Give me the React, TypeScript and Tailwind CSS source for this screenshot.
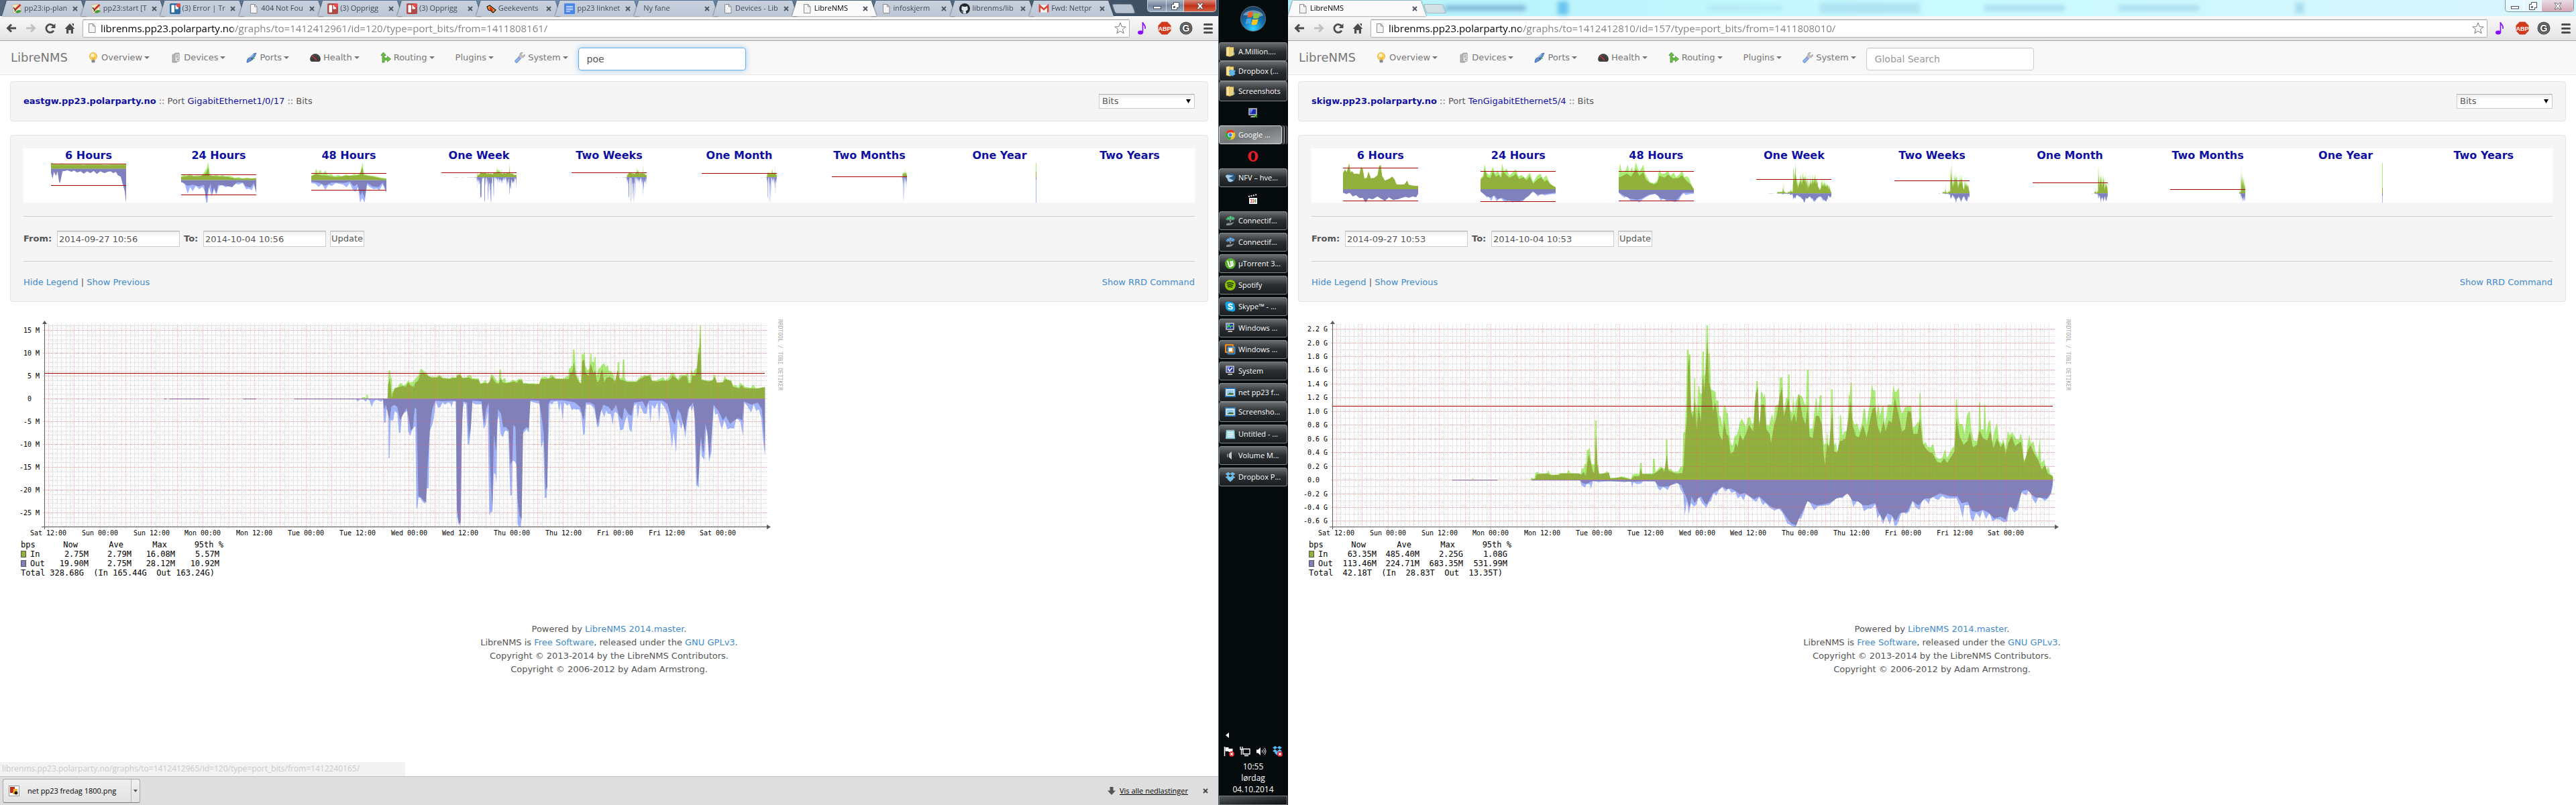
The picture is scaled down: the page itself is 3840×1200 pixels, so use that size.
import React from "react";
import type { ReactNode } from "react";

/* ------------------------------------------------------------------ */
/* Traffic data (x, y pairs on a 1404 x 907 sample raster)             */
/* ------------------------------------------------------------------ */

type Series = { zero: number; inMax: string; inAvg: string; outMax: string; outAvg: string; idle: [number, number][] };

const EAST: Series = {
  zero: 403,
  idle: [[320, 325], [330, 408], [473, 499], [573, 755]],
  inMax:
    "704,403 706,396 711,396 713,403 714,384 716,384 718,403 755,403 757,276 760,276 761,310 763,310 764,375 768,355 774,352 778,336 783,333 785,345 790,338 795,322 799,330 805,326 809,312 815,300 819,270 823,272 826,282 833,290 836,306 840,304 850,306 854,296 858,298 862,308 875,312 880,306 888,308 891,294 897,290 899,308 908,308 912,298 918,298 920,312 932,312 936,335 941,330 945,318 949,334 953,330 957,290 961,300 966,316 971,330 973,272 976,272 977,320 984,310 986,330 992,328 1000,318 1005,325 1010,314 1017,314 1019,332 1027,332 1030,336 1036,334 1050,336 1054,308 1062,304 1068,312 1074,294 1078,300 1082,312 1096,314 1103,304 1107,300 1108,268 1111,268 1113,256 1115,256 1116,184 1119,184 1121,250 1123,300 1127,308 1130,334 1132,330 1133,204 1136,204 1137,196 1139,196 1140,255 1142,262 1144,275 1148,270 1150,200 1152,200 1153,236 1157,240 1158,216 1160,216 1162,300 1166,268 1170,262 1173,250 1177,244 1180,262 1184,252 1186,278 1190,278 1194,290 1198,320 1202,318 1203,240 1206,240 1207,310 1212,308 1213,228 1216,228 1217,310 1221,325 1240,325 1244,310 1250,304 1256,296 1260,300 1268,292 1270,322 1278,322 1284,316 1292,306 1296,320 1303,308 1309,286 1312,286 1316,302 1320,316 1326,294 1334,298 1340,286 1343,330 1346,270 1350,290 1355,268 1359,268 1360,175 1362,175 1363,75 1365,75 1367,316 1374,320 1382,322 1388,318 1390,296 1393,296 1396,330 1408,328 1412,298 1415,316 1424,320 1428,344 1434,342 1438,354 1442,330 1446,340 1452,350 1462,354 1468,340 1472,356 1480,354 1490,350",
  inAvg:
    "755,403 756,340 759,310 761,345 763,402 766,372 770,356 778,350 784,346 790,350 795,330 800,345 806,350 809,330 814,325 819,290 824,286 828,292 834,300 840,308 852,308 856,302 862,312 876,314 882,310 889,310 891,298 897,298 901,311 914,308 920,316 932,318 936,337 944,332 950,336 954,325 958,302 962,320 966,332 972,335 975,308 979,330 986,334 994,330 1002,326 1007,332 1010,320 1017,320 1019,336 1050,338 1054,314 1066,314 1072,312 1076,304 1082,314 1108,314 1111,285 1115,284 1118,240 1121,295 1127,326 1132,336 1134,235 1138,228 1141,290 1147,300 1150,245 1153,262 1156,290 1159,275 1163,330 1167,322 1171,280 1173,270 1177,330 1181,310 1187,305 1193,312 1198,328 1203,275 1207,318 1214,320 1221,328 1240,328 1246,316 1256,304 1266,302 1270,324 1280,326 1290,322 1300,324 1306,315 1310,300 1316,310 1322,322 1328,304 1338,302 1341,332 1346,332 1348,300 1354,300 1357,284 1360,190 1362,210 1364,100 1366,318 1380,326 1388,322 1392,305 1397,332 1408,330 1413,315 1424,325 1428,350 1440,356 1444,342 1450,356 1476,358 1484,354 1490,352",
  outMax:
    "692,403 694,408 697,416 701,406 708,406 712,416 716,406 720,412 724,440 728,416 733,408 738,412 742,416 746,410 748,510 751,510 753,450 756,460 757,668 759,668 761,500 766,500 769,458 774,468 777,556 780,556 783,475 788,465 793,458 795,550 799,570 803,540 809,524 811,893 813,893 815,845 819,848 824,866 828,872 831,804 835,804 837,550 842,520 845,490 849,415 853,443 858,440 862,420 867,430 872,420 877,422 879,440 883,415 888,416 890,930 893,962 896,972 898,930 900,470 904,420 908,430 911,608 914,605 917,548 920,420 926,428 938,428 942,540 946,520 950,460 953,926 956,910 959,910 962,735 965,740 967,788 969,500 972,480 975,560 979,575 984,545 990,550 992,695 994,836 997,836 998,680 1003,684 1006,700 1008,965 1011,975 1014,975 1016,942 1018,560 1022,550 1026,540 1030,556 1033,415 1040,420 1051,425 1054,626 1058,590 1061,846 1065,846 1068,605 1071,420 1075,430 1079,416 1086,415 1089,462 1092,420 1096,502 1099,420 1105,435 1109,425 1114,455 1118,448 1122,452 1127,450 1132,468 1136,566 1139,560 1142,430 1150,430 1157,445 1160,480 1163,532 1167,524 1171,450 1177,485 1181,455 1184,470 1190,472 1193,522 1197,460 1203,470 1208,545 1214,540 1218,500 1222,478 1226,540 1230,555 1235,435 1240,425 1242,494 1246,430 1254,470 1260,470 1263,420 1267,512 1270,430 1275,448 1281,420 1284,512 1287,420 1294,440 1301,475 1306,555 1309,626 1312,550 1317,644 1320,490 1327,540 1331,500 1335,582 1339,490 1344,430 1347,458 1352,430 1356,788 1361,800 1364,580 1367,660 1372,678 1377,500 1381,686 1386,640 1390,430 1393,475 1398,470 1402,510 1406,540 1411,500 1417,540 1423,535 1430,538 1434,490 1442,505 1447,570 1450,420 1457,440 1463,465 1468,430 1473,458 1478,450 1483,490 1486,580 1490,660",
  outAvg:
    "746,403 749,450 752,430 756,475 759,500 762,440 768,430 774,440 779,500 786,470 792,445 796,490 800,545 804,538 808,440 811,450 815,840 819,842 822,850 826,860 830,868 833,700 838,520 842,450 848,412 860,414 888,412 890,900 894,960 897,960 899,600 902,415 910,420 913,580 917,530 920,412 938,415 943,518 947,450 952,420 955,720 959,900 962,560 966,640 970,450 976,470 980,530 986,530 991,545 994,700 998,680 1000,520 1004,530 1008,850 1012,930 1016,940 1019,545 1025,530 1030,535 1033,410 1050,412 1056,500 1059,560 1063,810 1066,800 1068,430 1072,410 1098,410 1110,415 1120,420 1130,440 1137,500 1141,420 1150,420 1158,432 1164,520 1169,470 1175,430 1186,440 1192,460 1200,430 1206,480 1212,500 1216,440 1224,470 1230,480 1235,420 1252,415 1258,445 1264,412 1290,412 1300,425 1308,490 1314,520 1320,450 1326,470 1334,550 1340,450 1350,420 1354,500 1358,790 1361,740 1365,570 1370,650 1374,510 1378,560 1382,670 1386,560 1390,430 1400,460 1408,500 1414,480 1422,515 1430,500 1438,490 1446,500 1449,415 1464,430 1476,420 1484,450 1488,560 1490,650",
};

const SKI: Series = {
  zero: 766,
  idle: [[320, 408], [474, 800]],
  inMax:
    "358,766 360,756 362,766 472,766 474,755 480,762 482,735 486,730 490,737 504,737 507,722 510,737 514,743 526,742 529,736 543,736 547,720 550,735 568,737 570,743 572,715 576,715 578,694 581,694 582,632 585,632 586,624 588,628 591,690 593,697 597,697 598,500 601,500 602,697 604,700 606,738 615,738 620,728 625,732 627,757 640,757 650,750 662,757 668,762 671,742 678,738 684,742 686,690 689,690 690,738 710,738 711,672 714,672 716,730 722,715 726,706 733,716 736,716 736,586 739,586 740,716 746,718 752,730 760,728 765,706 768,704 770,556 773,552 775,440 777,184 780,184 781,205 784,205 785,440 787,460 790,460 791,310 793,310 794,420 797,450 799,346 801,346 803,380 806,380 807,192 810,192 811,300 813,290 815,75 818,75 819,202 822,202 824,360 830,370 833,372 834,410 838,410 840,478 843,482 846,526 849,432 852,436 854,464 857,468 859,530 862,600 866,615 870,570 874,566 877,545 880,510 884,492 888,510 892,530 895,490 900,484 904,515 907,512 909,408 911,408 912,324 915,324 917,505 920,505 921,374 924,374 926,400 928,378 930,400 932,520 937,524 940,496 943,468 946,506 949,436 956,428 958,308 963,308 965,470 968,430 970,400 973,400 974,294 977,294 978,450 982,470 984,378 987,465 990,410 994,382 1000,390 1003,400 1006,428 1009,428 1011,274 1014,274 1016,536 1022,536 1024,490 1028,402 1030,402 1032,474 1036,388 1039,388 1041,556 1044,608 1048,602 1050,546 1053,610 1056,612 1058,361 1061,361 1063,614 1067,598 1070,636 1073,636 1075,476 1077,476 1080,568 1084,550 1090,544 1092,388 1094,388 1096,330 1098,330 1100,496 1104,520 1109,512 1113,550 1118,510 1121,448 1124,448 1127,520 1131,456 1134,420 1137,336 1140,366 1144,366 1146,484 1150,420 1153,480 1158,436 1160,436 1162,520 1166,480 1168,430 1176,430 1179,340 1182,372 1185,372 1188,358 1190,358 1192,436 1196,470 1202,440 1214,438 1217,530 1222,526 1226,508 1229,508 1230,378 1232,378 1234,496 1238,606 1242,596 1246,618 1252,620 1256,604 1258,620 1262,664 1268,672 1274,668 1280,626 1283,668 1288,650 1294,622 1298,616 1301,406 1303,406 1305,476 1308,516 1314,516 1318,560 1322,484 1326,460 1328,460 1331,545 1336,590 1342,592 1345,545 1346,418 1348,418 1350,540 1355,540 1356,430 1358,430 1360,560 1364,510 1368,498 1372,600 1376,545 1381,510 1385,590 1390,606 1393,580 1398,624 1402,546 1406,568 1411,552 1418,582 1424,586 1427,556 1431,590 1433,676 1438,674 1440,612 1444,562 1447,605 1452,592 1456,640 1461,665 1464,576 1467,690 1473,674 1477,725 1481,704 1484,738 1490,748",
  inAvg:
    "472,766 482,760 484,742 490,740 506,738 512,745 526,744 532,738 566,738 572,742 576,730 580,750 583,690 586,650 590,690 594,730 597,735 600,560 603,700 606,740 625,734 628,760 650,754 668,764 674,750 684,750 687,715 690,740 712,740 720,728 728,712 733,730 738,650 741,724 756,738 768,736 771,690 774,560 777,490 779,260 782,210 785,460 789,490 792,400 796,545 800,430 804,510 808,290 811,370 814,260 817,130 820,330 824,370 828,460 832,420 836,470 840,560 846,590 850,500 854,560 858,570 862,650 868,640 872,600 876,620 880,560 886,590 892,560 898,520 906,550 911,380 915,350 918,530 922,430 928,430 932,540 938,560 941,600 946,530 952,480 958,390 962,350 966,480 972,430 975,400 980,510 986,470 990,510 995,380 1002,480 1008,520 1012,430 1016,572 1022,580 1028,480 1034,480 1040,520 1043,640 1046,698 1050,600 1054,620 1060,450 1064,640 1070,642 1075,590 1080,590 1086,580 1092,480 1096,410 1100,520 1106,570 1112,575 1120,520 1127,575 1133,510 1138,450 1144,440 1148,520 1154,560 1160,500 1164,550 1170,500 1176,510 1182,400 1190,480 1196,550 1202,540 1207,460 1213,460 1218,560 1226,560 1231,490 1236,600 1242,625 1248,640 1256,648 1264,685 1272,690 1278,670 1284,690 1290,668 1298,640 1302,490 1308,570 1316,610 1324,590 1328,550 1334,620 1342,610 1347,545 1354,580 1362,590 1368,545 1374,625 1381,580 1388,620 1394,600 1398,650 1403,600 1410,570 1416,615 1428,595 1434,690 1440,640 1446,610 1454,650 1462,680 1468,720 1475,700 1480,738 1486,745 1490,752",
  outMax:
    "568,766 572,790 578,800 582,785 588,785 590,808 594,772 606,776 626,770 655,776 668,772 670,800 673,776 680,785 688,782 692,772 716,775 720,802 725,814 730,798 736,805 740,812 744,790 752,786 760,780 765,810 770,830 773,924 777,860 781,920 785,870 791,886 796,876 800,840 806,868 815,892 820,866 824,860 829,825 834,838 840,810 846,800 852,818 858,804 864,824 871,818 876,850 882,838 887,858 892,832 898,840 906,856 912,864 918,844 925,880 930,868 938,890 948,904 956,894 964,915 972,960 982,972 989,976 993,940 1000,938 1006,900 1012,850 1018,875 1025,902 1032,884 1042,882 1054,878 1062,862 1070,842 1080,848 1088,828 1096,838 1101,888 1108,862 1116,868 1122,906 1130,894 1136,896 1144,875 1148,938 1153,920 1159,965 1165,925 1172,965 1177,930 1182,972 1186,970 1190,945 1196,908 1204,918 1210,908 1217,860 1222,888 1230,900 1236,852 1242,856 1248,874 1254,834 1260,850 1267,856 1274,838 1282,850 1302,848 1308,880 1314,935 1318,880 1326,880 1330,938 1335,952 1340,912 1348,935 1353,902 1360,942 1366,912 1372,950 1380,942 1387,944 1394,956 1401,952 1406,880 1414,912 1422,900 1428,820 1438,836 1444,806 1450,850 1456,872 1462,844 1468,848 1474,860 1480,850 1486,830 1490,790",
  outAvg:
    "568,766 574,780 580,784 588,776 594,771 650,773 670,774 714,771 722,794 730,796 742,795 756,778 766,790 772,824 777,850 782,890 786,840 792,870 798,850 804,840 812,870 816,876 822,850 828,825 836,815 846,796 854,808 862,804 872,816 880,830 890,824 900,840 908,852 918,840 928,862 940,885 950,895 960,895 970,930 980,960 990,970 996,935 1004,900 1012,862 1020,870 1030,880 1042,876 1056,868 1068,850 1080,842 1090,826 1100,860 1110,862 1120,880 1130,880 1144,870 1150,910 1160,948 1168,915 1176,925 1184,950 1192,915 1206,910 1216,860 1228,880 1240,850 1252,848 1270,826 1290,840 1304,840 1312,870 1324,864 1332,905 1342,910 1354,900 1364,912 1376,938 1388,930 1398,944 1406,886 1418,900 1430,815 1440,810 1448,830 1456,845 1466,845 1478,850 1486,825 1490,770",
};

const close = (pts: string, zero: number) => {
  const list = pts.split(" ");
  return `${list[0].split(",")[0]},${zero} ${pts} ${list[list.length - 1].split(",")[0]},${zero}`;
};

function Areas({ s }: { s: Series }) {
  return (
    <>
      <polygon points={close(s.inMax, s.zero)} fill="#aaee77" />
      <polygon points={close(s.inAvg, s.zero)} fill="#91b13c" />
      <polygon points={close(s.outMax, s.zero)} fill="#a2b5ff" />
      <polygon points={close(s.outAvg, s.zero)} fill="#8080bd" />
      {s.idle.map(([a, b]) => (
        <rect key={a} x={a} y={s.zero - 1} width={b - a} height="4" fill="#8080bd" />
      ))}
    </>
  );
}

/* ------------------------------------------------------------------ */
/* Thumbnails                                                          */
/* ------------------------------------------------------------------ */

type Thumb = { title: string; span?: number; lines: number[]; sliver?: boolean; zero?: number; inMax?: string; inAvg?: string; outMax?: string; outAvg?: string };

const EAST_THUMBS: Thumb[] = [
  {
    title: "6 Hours", lines: [2, 34], zero: 29,
    inMax: "0,3 3,0 6,8 10,4 18,10 26,3 34,10 50,8 64,9 70,7 78,11 90,8 110,9 120,8 130,11 150,9 165,8 183,9",
    inAvg: "0,12 183,12",
    outMax: "0,45 4,72 7,42 12,60 16,40 20,88 22,92 28,40 34,38 40,35 50,42 56,36 64,45 72,40 80,50 88,40 96,48 104,38 112,52 120,40 130,48 138,42 145,40 152,48 158,42 163,58 170,64 175,98 180,130 183,180",
    outAvg: "0,45 4,72 7,42 12,60 16,40 20,88 22,92 28,40 34,38 40,35 50,42 56,36 64,45 72,40 80,50 88,40 96,48 104,38 112,52 120,40 130,48 138,42 145,40 152,48 158,42 163,58 170,64 175,98 180,130 183,180",
  },
  {
    title: "24 Hours", lines: [18, 48], zero: 80,
    inMax: "0,62 6,56 14,60 20,50 30,62 40,58 48,62 56,45 62,28 66,0 70,50 76,62 86,56 94,62 100,56 108,64 116,60 124,64 130,70 140,66 150,72 160,68 170,72 183,70",
    inAvg: "0,66 20,60 40,64 56,56 62,44 66,24 69,60 90,62 110,64 130,72 150,73 183,72",
    outMax: "0,90 8,92 16,140 22,110 28,130 36,105 44,120 52,110 58,130 61,180 64,180 68,110 74,152 80,120 86,145 92,108 100,100 108,112 116,105 124,112 132,95 140,100 150,92 158,120 166,118 172,125 178,100 183,138",
    outAvg: "0,86 16,105 28,100 44,108 56,100 61,170 66,120 72,95 76,145 80,110 86,140 90,100 108,105 124,110 136,90 150,90 158,108 170,112 177,92 183,135",
  },
  {
    title: "48 Hours", lines: [16, 41], zero: 80,
    inMax: "0,60 8,50 12,28 16,50 22,32 27,54 34,36 40,56 48,52 56,62 66,56 74,64 84,54 94,60 104,52 112,56 120,44 125,0 128,50 138,58 150,60 160,64 170,68 183,72",
    inAvg: "0,62 12,52 24,58 40,60 60,66 84,60 104,60 118,56 124,22 128,58 150,64 170,72 183,74",
    outMax: "0,92 10,96 18,110 26,96 34,124 42,100 50,106 60,92 68,96 78,100 86,112 94,94 102,125 108,132 114,110 119,180 124,160 130,180 136,100 144,112 152,120 160,118 166,125 174,98 183,138",
    outAvg: "0,86 20,92 34,104 50,90 80,92 94,86 104,108 112,96 120,150 124,130 130,160 136,92 150,108 164,110 174,90 183,130",
  },
  { title: "One Week", span: 1, lines: [15] },
  { title: "Two Weeks", span: 2, lines: [15] },
  { title: "One Month", span: 4, lines: [16] },
  { title: "Two Months", span: 9, lines: [21] },
  { title: "One Year", sliver: true, lines: [] },
  { title: "Two Years", lines: [] },
];

const SKI_THUMBS: Thumb[] = [
  {
    title: "6 Hours", lines: [8, 57], zero: 120,
    inMax: "0,48 5,32 9,44 15,2 18,45 22,40 27,52 34,50 40,54 44,18 48,30 52,72 58,70 62,42 68,72 76,70 84,58 88,18 92,10 95,60 102,82 112,74 120,64 126,78 130,98 140,100 150,98 156,82 160,100 170,104 183,106",
    inAvg: "0,48 5,32 9,44 15,6 18,45 22,40 27,52 34,50 40,54 44,20 48,30 52,72 58,70 62,42 68,72 76,70 84,58 88,18 92,12 95,60 102,82 112,74 120,64 126,78 130,98 140,100 150,98 156,82 160,100 170,104 183,106",
    outMax: "0,135 8,142 16,136 24,152 32,146 40,160 48,158 55,180 62,160 72,165 84,152 90,160 102,172 112,156 122,168 134,164 144,158 152,154 160,158 170,152 178,156 183,140",
    outAvg: "0,135 8,142 16,136 24,152 32,146 40,160 48,158 55,178 62,160 72,165 84,152 90,160 102,172 112,156 122,168 134,164 144,158 152,154 160,158 170,152 178,156 183,140",
  },
  {
    title: "24 Hours", lines: [13, 58], zero: 120,
    inMax: "0,72 6,60 10,6 14,46 22,58 30,20 36,52 42,36 48,62 53,6 57,40 64,28 70,60 78,46 86,30 92,62 100,56 110,72 120,46 128,88 138,60 146,50 152,76 160,58 168,90 176,104 183,110",
    inAvg: "0,78 8,62 11,30 16,65 24,70 30,42 38,65 44,55 50,70 54,40 62,55 70,68 80,60 86,50 94,75 104,66 112,80 120,62 128,95 140,74 148,66 156,86 162,78 170,98 183,112",
    outMax: "0,130 8,142 16,158 20,150 26,175 32,148 40,176 48,150 54,170 62,180 70,166 78,180 86,172 94,178 102,176 110,160 118,150 126,132 132,136 140,152 148,140 156,148 166,144 183,140",
    outAvg: "0,130 14,150 24,158 34,148 42,165 52,160 66,172 94,174 104,168 118,148 128,130 138,145 156,142 183,136",
  },
  {
    title: "48 Hours", lines: [13, 57], zero: 123,
    inMax: "0,60 3,2 7,40 12,44 18,32 22,10 26,48 32,20 36,46 42,0 46,24 50,42 55,28 60,10 64,50 70,70 76,88 86,94 94,82 99,30 104,52 112,50 120,38 126,60 134,46 140,66 150,50 154,34 160,66 167,62 172,74 178,104 183,118",
    inAvg: "0,68 10,60 20,50 30,64 42,30 50,60 60,44 66,76 76,92 86,98 94,90 99,60 112,68 120,55 132,72 146,70 154,58 164,80 176,100 183,120",
    outMax: "0,136 8,150 14,158 20,150 28,170 36,175 44,172 50,180 58,166 66,156 76,146 88,142 96,150 102,170 110,162 118,176 126,170 136,178 146,172 152,150 158,138 164,146 174,142 183,140",
    outAvg: "0,134 14,150 28,162 44,168 56,162 74,144 90,140 102,160 118,168 140,170 156,136 183,136",
  },
  { title: "One Week", span: 1, lines: [25] },
  { title: "Two Weeks", span: 2, lines: [27] },
  { title: "One Month", span: 4, lines: [30] },
  { title: "Two Months", span: 9, lines: [40] },
  { title: "One Year", sliver: true, lines: [] },
  { title: "Two Years", lines: [] },
];

function ThumbGraph({ t, s }: { t: Thumb; s: Series }) {
  const zero = Math.round((s.zero - 68) / 15.117);
  return (
    <svg className="h-[60px] w-28" viewBox="0 0 112 60" aria-hidden="true">
      {t.zero !== undefined && (
        <svg width="112" height="60" viewBox="0 0 183 180" preserveAspectRatio="none">
          <polygon points={close(t.inMax!, t.zero)} fill="#aaee77" />
          <polygon points={close(t.inAvg!, t.zero)} fill="#91b13c" />
          <polygon points={close(t.outMax!, t.zero)} fill="#a2b5ff" />
          <polygon points={close(t.outAvg!, t.zero)} fill="#8080bd" />
        </svg>
      )}
      {t.span && (
        <svg width="112" height="60" viewBox={`${1490 - 1404 * t.span} 68 ${1404 * t.span} 907`} preserveAspectRatio="none">
          <Areas s={s} />
        </svg>
      )}
      {t.sliver && (
        <>
          <rect x="110" y="1" width="1" height={zero - 1} fill="#aaee77" />
          <rect x="110" y={zero - 8} width="1" height="8" fill="#91b13c" />
          <rect x="110" y={zero} width="1" height={60 - zero} fill="#a2b5ff" />
          <rect x="110" y={zero} width="1" height="4" fill="#8080bd" />
        </>
      )}
      {t.lines.map((y) => (
        <rect key={y} x="0" y={y} width="112" height="1" fill="#aa0000" />
      ))}
    </svg>
  );
}

/* ------------------------------------------------------------------ */
/* Main RRD chart                                                      */
/* ------------------------------------------------------------------ */

const TIMES = ["Sat 12:00", "Sun 00:00", "Sun 12:00", "Mon 00:00", "Mon 12:00", "Tue 00:00", "Tue 12:00", "Wed 00:00", "Wed 12:00", "Thu 00:00", "Thu 12:00", "Fri 00:00", "Fri 12:00", "Sat 00:00"];

type ChartSpec = { s: Series; labels: [string, number][]; minor: number; limit: number };

const range = (n: number) => Array.from({ length: n }, (_, i) => i);

function Chart({ spec }: { spec: ChartSpec }) {
  const zeroY = Math.round(spec.s.zero / 3);
  const minors = range(120)
    .map((i) => zeroY + (i - 60) * spec.minor)
    .filter((y) => y > 23 && y < 325);
  const hours = range(168)
    .map((i) => 72 + (i * 76.75) / 12)
    .filter((x) => x < 1140);
  const six = range(28).map((i) => Math.round(72 + i * 38.37) + 0.5);
  return (
    <svg className="block h-[345px] w-[1180px]" viewBox="0 0 1180 345" role="img" aria-label="Port traffic in bits per second">
      <g transform="scale(0.7653 0.33333)">
        <Areas s={spec.s} />
      </g>
      <g stroke="#8c8c8c" strokeOpacity="0.38" strokeDasharray="1 1">
        {hours.map((x, i) => (i % 6 ? <line key={i} x1={Math.round(x) + 0.5} x2={Math.round(x) + 0.5} y1="23" y2="325" /> : null))}
        {minors.map((y) => (
          <line key={y} x1="64" x2="1143" y1={Math.round(y) + 0.5} y2={Math.round(y) + 0.5} />
        ))}
      </g>
      <g stroke="#f06060" strokeOpacity="0.55" strokeDasharray="1 1">
        {six.map((x) => (
          <line key={x} x1={x} x2={x} y1="23" y2="328" />
        ))}
        {spec.labels.map(([l, y]) => (
          <line key={l} x1="64" x2="1143" y1={y + 0.5} y2={y + 0.5} />
        ))}
      </g>
      <rect x="66" y={spec.limit} width="1074" height="1" fill="#aa0000" />
      <path d="M62 325.5H1146M66.5 329V20" stroke="#5a5a5a" fill="none" />
      <path d="M63 23L66.500 18L70 23zM1143 322L1149 325.500L1143 329z" fill="#5a5a5a" />
      <g fontFamily="DejaVu Sans Mono, monospace" fontSize="10" fill="#000">
        {spec.labels.map(([l, y]) => (
          <text key={l} x={l.startsWith("0") && !l.endsWith("G") ? 47 : 59} y={y + 4} textAnchor="end">{l}</text>
        ))}
        {TIMES.map((l, i) => (
          <text key={l} x={72 + Math.round(i * 76.8)} y="338" textAnchor="middle">{l}</text>
        ))}
      </g>
      <text transform="translate(1160 16) rotate(90)" fontFamily="DejaVu Sans Mono, monospace" fontSize="8" fill="#a8a8a8">
        RRDTOOL / TOBI OETIKER
      </text>
    </svg>
  );
}

type Row = { name: string; color: string; values: string[] };

function Legend({ rows, total }: { rows: Row[]; total: string }) {
  return (
    <div className="pl-[31px] font-['DejaVu_Sans_Mono','Liberation_Mono',monospace] text-[12px] leading-[14px] text-black">
      <table className="w-[302px] table-fixed">
        <thead>
          <tr className="h-[14px]">
            <th className="w-9 p-0 text-left font-normal">bps</th>
            <th className="w-[65px] p-0 pr-4 text-right font-normal">Now</th>
            <th className="w-16 p-0 pr-3 text-right font-normal">Ave</th>
            <th className="w-[65px] p-0 pr-3 text-right font-normal">Max</th>
            <th className="w-[72px] p-0 text-right font-normal">95th %</th>
          </tr>
        </thead>
        <tbody>
          {rows.map((r) => (
            <tr key={r.name} className="h-[14px]">
              <th className="p-0 text-left font-normal">
                <span className="flex items-center gap-1.5">
                  <span className={`h-[10px] w-2 border border-[#555] ${r.color}`} />
                  {r.name}
                </span>
              </th>
              {r.values.map((v, i) => (
                <td key={i} className={i === 3 ? "p-0 pr-1.5 text-right" : "p-0 text-right"}>{v}</td>
              ))}
            </tr>
          ))}
        </tbody>
      </table>
      <p className="whitespace-pre">{total}</p>
    </div>
  );
}

/* ------------------------------------------------------------------ */
/* Icons                                                               */
/* ------------------------------------------------------------------ */

const Ico = ({ children, className = "size-4" }: { children: ReactNode; className?: string }) => (
  <svg viewBox="0 0 16 16" className={`${className} shrink-0`} fill="none" aria-hidden="true">{children}</svg>
);

const PageIcon = () => (
  <Ico>
    <path d="M3.500 1.500h6l3.500 3.500v9.500h-9.500z" fill="#f4f4f4" stroke="#8a8a8a" />
    <path d="M9.500 1.500v3.500h3.500" stroke="#8a8a8a" />
  </Ico>
);
const WikiIcon = () => (
  <Ico>
    <path d="M1 2l11-1 3 12-12 2z" fill="#efe6c8" stroke="#b8a878" strokeWidth=".6" />
    <path d="M13.500 2L5 10" stroke="#d03020" strokeWidth="3" />
    <path d="M3 6l3 4-1 2" stroke="#444" strokeWidth="1.500" />
    <path d="M6 13c2-3 5-4 9-2-2 3-6 5-9 2z" fill="#3f9b3a" />
  </Ico>
);
const TrelloIcon = ({ red }: { red?: boolean }) => (
  <Ico>
    <rect width="16" height="16" rx="2" fill={red ? "#b04a46" : "#2f6f9f"} />
    <rect x="2.500" y="2.500" width="4.500" height="11" rx=".6" fill="#fff" />
    <rect x="8.500" y="2.500" width="4.500" height="6" rx=".6" fill="#fff" />
    <circle cx="13" cy="3" r="3" fill="#ee4a4a" />
  </Ico>
);
const GeekIcon = () => (
  <Ico>
    <path d="M2 5l4-2 9 7-4 4-3-3-4-1z" fill="#f5a020" stroke="#201008" strokeWidth="1.200" />
    <path d="M6 5l5 4-1 3-4-3z" fill="#e02010" />
  </Ico>
);
const DocsIcon = () => (
  <Ico>
    <rect width="16" height="16" rx="1" fill="#4a86e8" />
    <path d="M3 4.500h10M3 7h10M3 9.500h10M3 12h6" stroke="#fff" strokeWidth="1.200" />
  </Ico>
);
const GithubIcon = () => (
  <Ico>
    <circle cx="8" cy="8" r="8" fill="#24292e" />
    <path d="M4 4l2 1h4l2-1 .4 2.500c1 2.500-.4 4.500-2.800 4.800.6.700.6 1.500.6 4.200H5.800v-2c-2 .3-2-1.300-3-1.700 1.500-.2 1.500 1 3 .7 0-.5.200-.9.600-1.200C4 11 2.600 9 3.600 6.500z" fill="#dfe5ee" />
  </Ico>
);
const GmailIcon = () => (
  <Ico>
    <rect x=".5" y="2.500" width="15" height="11" fill="#f4f4f4" />
    <path d="M1.800 13.500V3.500L8 9l6.200-5.500v10" stroke="#d64a3c" strokeWidth="2.600" />
  </Ico>
);

const Bulb = () => (
  <Ico>
    <circle cx="8" cy="6" r="5.500" fill="#ffd45c" stroke="#d99a28" strokeWidth=".7" />
    <circle cx="7" cy="4.500" r="2.500" fill="#fff6c8" />
    <path d="M6 7l2 4 2-4" stroke="#e09020" strokeWidth=".8" />
    <rect x="5.500" y="11" width="5" height="4.500" rx="1.500" fill="#9a9a9a" />
    <path d="M5.500 13h5" stroke="#666" strokeWidth=".7" />
  </Ico>
);
const Server = () => (
  <Ico>
    <path d="M3 4l5-3h5v11l-4 3H3z" fill="#b4b4b4" stroke="#8a8a8a" strokeWidth=".7" />
    <path d="M7 2.500h6v11H7z" fill="#e2e2e2" stroke="#999" strokeWidth=".6" />
    <path d="M8.500 5h3M8.500 7h3" stroke="#888" />
    <circle cx="11" cy="10.500" r="1" fill="#50b040" />
  </Ico>
);
const Plug = () => (
  <Ico>
    <path d="M1 15c0-4 1-6 4-7l6-6 4-1-2 5-5 6c-2 2-4 1-5 3z" fill="#5f8fce" stroke="#3a66a4" strokeWidth=".8" />
    <path d="M6 7l4 4" stroke="#2e548c" strokeWidth="1.200" />
    <path d="M6 8l5-5" stroke="#a9cbf0" strokeWidth="1.200" />
    <path d="M9 9l4 1-2-3" fill="#58a050" />
  </Ico>
);
const Gauge = () => (
  <Ico>
    <path d="M.5 10a7.500 7.500 0 0115 0c0 2-1 3.500-2 3.500H2.500C1.500 13.500.5 12 .5 10z" fill="#3c3c3c" stroke="#222" strokeWidth=".6" />
    <path d="M3 9a5 5 0 0110 0" stroke="#888" strokeDasharray="1 1.500" />
    <path d="M4 5l6 7" stroke="#e03028" strokeWidth="1.200" />
  </Ico>
);
const Arrows = () => (
  <Ico>
    <path d="M4.500 0l4 4.500h-2.500v4l4.500 0V6L15.500 10l-5 4v-2.500H6V15H3V4.500H.8z" fill="#6cc04a" stroke="#3c8a2c" strokeWidth=".8" />
  </Ico>
);
const Wrench = () => (
  <Ico>
    <path d="M15 3l-2.500 2.500-2-1L10 2.500 12.500.5c-3-.8-5 1-4.500 3.800L5.500 7l3 3 2.700-2.500C14 8 16 6 15 3z" fill="#c4c4c4" stroke="#858585" strokeWidth=".7" />
    <path d="M6 7l3 3-4.500 5c-2 1.500-4.500-.5-3.500-3z" fill="#8fb2ec" stroke="#5478bc" strokeWidth=".7" />
  </Ico>
);

/* ------------------------------------------------------------------ */
/* Browser chrome                                                      */
/* ------------------------------------------------------------------ */

type TabSpec = { title: string; icon?: ReactNode; active?: boolean };

function Tab({ tab }: { tab: TabSpec }) {
  const tone = tab.active ? "text-black" : "text-[#444a54]";
  return (
    <div className={`-mr-2 min-w-0 flex-1 drop-shadow-[0_0_1px_#3c4654] ${tab.active ? "z-10" : ""}`}>
      <div
        role="tab"
        aria-selected={!!tab.active}
        className={`flex h-[23px] items-center pr-2.5 pl-[14px] [clip-path:polygon(7px_0,calc(100%-8px)_0,100%_100%,0_100%)] ${tab.active ? "bg-[#f9f9f9]" : "bg-linear-to-b from-[#c8d0dd] to-[#bcc7d7]"}`}
      >
        {tab.icon && <span className="mr-[3px]">{tab.icon}</span>}
        <button className={`min-w-0 flex-1 overflow-hidden text-left text-[11px] whitespace-nowrap ${tone}`}>{tab.title}</button>
        <button aria-label={`Close ${tab.title}`} className="size-[14px] shrink-0 p-[3px]">
          <svg viewBox="0 0 8 8" className="size-2"><path d="M1 1l6 6M7 1L1 7" stroke="#50565e" strokeWidth="1.800" /></svg>
        </button>
      </div>
    </div>
  );
}

function WindowButtons({ light }: { light?: boolean }) {
  const edge = light ? "border-[#7c9aa6] bg-white/40" : "border-[#c5ccd6] bg-linear-to-b from-[#aeb9c8] via-[#7888a0] to-[#9fb0c6]";
  return (
    <div className={`ml-auto mr-[3px] flex h-[18px] overflow-hidden rounded-b-[5px] border border-t-0 ${edge}`}>
      <button aria-label="Minimize" className="flex w-[28px] items-center justify-center border-r border-white/60">
        <svg viewBox="0 0 12 10" className="h-2.5 w-3"><rect x=".5" y="5.500" width="11" height="3.500" fill="#fff" stroke="#454b58" /></svg>
      </button>
      <button aria-label="Restore" className="flex w-[26px] items-center justify-center border-r border-white/60">
        <svg viewBox="0 0 12 12" className="size-3"><path d="M3.500.5h8v8h-3v3h-8v-8h3zM3.500 6.500h2v2h-2z" fill="#fff" stroke="#454b58" fillRule="evenodd" /></svg>
      </button>
      <button aria-label="Close" className={`flex w-[47px] items-center justify-center ${light ? "bg-linear-to-b from-[#e8dce8] to-[#d4a8b4]" : "bg-linear-to-b from-[#d88a78] via-[#c0301a] to-[#d8603c]"}`}>
        <svg viewBox="0 0 12 10" className="h-2.5 w-3"><path d="M1 .5h3l2 2.500 2-2.500h3L7.800 5 11 9.500H8L6 7 4 9.500H1L4.200 5z" fill="#fff" stroke="#454b58" strokeWidth=".8" /></svg>
      </button>
    </div>
  );
}

const NewTab = ({ light }: { light?: boolean }) => (
  <button aria-label="New tab" className={`mt-1.5 h-[14px] w-[30px] skew-x-[20deg] rounded-[3px] border ${light ? "border-[#a0b8c0] bg-[#d4e2e6]" : "border-[#8c98a8] bg-[#b8c4d2]"}`} />
);

function Toolbar({ url }: { url: string }) {
  const btn = "flex size-[18px] items-center justify-center";
  return (
    <div className="flex h-[37px] items-center border-b border-[#a6a6a6] bg-linear-to-b from-[#f9f9f9] to-[#e4e4e4] pl-2">
      <div className="flex w-[115px] gap-[11px]">
        <button aria-label="Back" className={btn}><svg viewBox="0 0 16 14" className="h-3.5 w-4"><path d="M15 7H3M8 1.500L2.500 7 8 12.500" stroke="#4c4c4c" strokeWidth="3" fill="none" /></svg></button>
        <button aria-label="Forward" className={btn}><svg viewBox="0 0 16 14" className="h-3.5 w-4"><path d="M1 7h12M8 1.500L13.500 7 8 12.500" stroke="#c2c2c2" strokeWidth="3" fill="none" /></svg></button>
        <button aria-label="Reload" className={btn}><svg viewBox="0 0 16 16" className="size-4"><path d="M13 11.500A6 6 0 1112.500 4.500" stroke="#4c4c4c" strokeWidth="2.800" fill="none" /><path d="M15.500 1v7h-7z" fill="#4c4c4c" /></svg></button>
        <button aria-label="Home" className={btn}><svg viewBox="0 0 16 16" className="size-4"><path d="M8 1l7 7.500-1.200 1L13 8.800V16H9.800v-5H6.200v5H3V8.800l-.8.700-1.200-1zM11.500 1H14v4l-2.500-2.500z" fill="#4c4c4c" /></svg></button>
      </div>
      <div className="flex h-[27px] min-w-0 flex-1 items-center rounded-[2px] border border-[#b0b0b0] border-t-[#999] bg-white pr-1 pl-[5px]">
        <PageIcon />
        <input
          aria-label="Address"
          defaultValue={url}
          className="ml-[5px] min-w-0 flex-1 bg-linear-to-r from-black from-[197px] to-[#808080] to-[197px] bg-clip-text text-[15px] leading-5 text-transparent"
        />
        <button aria-label="Bookmark"><svg viewBox="0 0 18 18" className="size-[18px]"><path d="M9 1l2.200 5.700 6 .3-4.700 3.800 1.600 5.900L9 13.400l-5.100 3.300 1.600-5.900L.8 7l6-.3z" fill="#fff" stroke="#777" /></svg></button>
      </div>
      <div className="flex w-[132px] items-center pl-2.5">
        <button aria-label="Music"><svg viewBox="0 0 18 20" className="h-5 w-[18px]"><ellipse cx="6" cy="16.500" rx="4" ry="3" fill="#8a0bff" /><path d="M9.500 17V1c0 4 5 4 3.500 10" stroke="#8a0bff" strokeWidth="1.600" fill="none" /></svg></button>
        <button aria-label="ABP" className="ml-3.5"><svg viewBox="0 0 20 20" className="size-5"><path d="M6 .5h8L19.500 6v8L14 19.500H6L.5 14V6z" fill="#d13a1c" /><text x="10" y="13.500" textAnchor="middle" fontSize="9" fontWeight="700" fontFamily="Liberation Sans, sans-serif" fill="#fff">ABP</text></svg></button>
        <button aria-label="G" className="ml-3"><svg viewBox="0 0 20 20" className="size-5"><circle cx="10" cy="10" r="9.500" fill="#4a4a4a" /><circle cx="10" cy="10" r="7.500" fill="none" stroke="#999" strokeWidth=".8" /><text x="10" y="15" textAnchor="middle" fontSize="14" fontWeight="700" fontFamily="Liberation Sans, sans-serif" fill="#fff">G</text></svg></button>
        <button aria-label="Menu" className="ml-4 flex w-3.5 flex-col gap-[3px]">
          <span className="h-[3px] rounded-xs bg-[#4c4c4c]" /><span className="h-[3px] rounded-xs bg-[#4c4c4c]" /><span className="h-[3px] rounded-xs bg-[#4c4c4c]" />
        </button>
      </div>
    </div>
  );
}

/* ------------------------------------------------------------------ */
/* LibreNMS page                                                       */
/* ------------------------------------------------------------------ */

const NAV: [string, ReactNode][] = [
  ["Overview", <Bulb />], ["Devices", <Server />], ["Ports", <Plug />], ["Health", <Gauge />],
  ["Routing", <Arrows />], ["Plugins", null], ["System", <Wrench />],
];

type PageSpec = {
  id: string; search: string; device: string; port: string; from: string; to: string;
  thumbs: Thumb[]; chart: ChartSpec; rows: Row[]; total: string;
};

const A = ({ children }: { children: ReactNode }) => <a href="#" className="text-[#428bca]">{children}</a>;
const field = "border border-[#ccc] border-t-[#aaa] bg-linear-to-b from-[#eee] via-white to-white via-40%";

function Page({ p }: { p: PageSpec }) {
  return (
    <div className="flex-1 bg-white font-['DejaVu_Sans',Verdana,sans-serif] text-[13px] leading-5 text-[#555]">
      <nav className="flex h-[51px] items-center border-b border-[#e7e7e7] bg-[#f8f8f8] pl-4 text-[#777]">
        <a href="#" className="w-[100px] text-[18px]">LibreNMS</a>
        <div className="flex gap-px">
          {NAV.map(([label, icon]) => (
            <button key={label} className="flex items-center px-[15px]">
              {icon && <span className="mr-1">{icon}</span>}
              {label}
              <svg viewBox="0 0 8 4" className="ml-[3px] h-1 w-2"><path d="M0 0h8L4 4z" fill="#777" /></svg>
            </button>
          ))}
        </div>
        <input
          aria-label="Global Search"
          placeholder="Global Search"
          defaultValue={p.search}
          className={`mt-1 h-[34px] w-[250px] rounded-[4px] border bg-white px-3 text-[14px] text-[#555] placeholder:text-[#999] ${p.search ? "border-[#66afe9] shadow-[0_0_8px_rgba(102,175,233,0.6)]" : "border-[#ccc] shadow-[inset_0_1px_1px_rgba(0,0,0,0.075)]"}`}
        />
      </nav>

      <main>
        <section className="mx-[15px] mt-[9px] flex h-[60px] items-center justify-between rounded-[4px] border border-[#e3e3e3] bg-[#f5f5f5] px-[19px]">
          <h1><a href="#" className="font-bold text-[#1010a0]">{p.device}</a> :: Port <a href="#" className="text-[#1010a0]">{p.port}</a> :: Bits</h1>
          <div className="relative">
            <select aria-label="Graph type" className={`h-[22px] w-[143px] appearance-none px-1 text-[13px] leading-5 ${field}`}><option>Bits</option></select>
            <svg viewBox="0 0 7 6" className="pointer-events-none absolute top-2 right-1.5 h-1.5 w-[7px]"><path d="M0 0h7L3.500 6z" fill="#000" /></svg>
          </div>
        </section>

        <section className="mx-[15px] mt-5 rounded-[4px] border border-[#e3e3e3] bg-[#f5f5f5] px-[19px] pt-[19px]">
          <div className="grid grid-cols-9 bg-white">
            {p.thumbs.map((t) => (
              <a href="#" key={t.title} className="flex h-[81px] flex-col items-center text-[16px] leading-[21px] font-bold text-[#1010a0]">
                {t.title}
                <ThumbGraph t={t} s={p.chart.s} />
              </a>
            ))}
          </div>
          <hr className="mt-5 border-[#ccc]" />
          <form className="my-[21px] flex h-6 items-center" onSubmit={(e) => e.preventDefault()}>
            <label htmlFor={`f-${p.id}`} className="w-[50px] font-bold">From:</label>
            <input id={`f-${p.id}`} defaultValue={p.from} className={`h-6 w-[183px] px-0.5 ${field}`} />
            <label htmlFor={`t-${p.id}`} className="ml-1.5 w-[29px] font-bold">To:</label>
            <input id={`t-${p.id}`} defaultValue={p.to} className={`h-6 w-[183px] px-0.5 ${field}`} />
            <button className={`ml-1.5 h-6 px-px ${field}`}>Update</button>
          </form>
          <hr className="border-[#ccc]" />
          <div className="flex justify-between pt-[21px] pb-[18px]">
            <span><A>Hide Legend</A> | <A>Show Previous</A></span>
            <A>Show RRD Command</A>
          </div>
        </section>

        <section className="mt-2.5">
          <Chart spec={p.chart} />
          <Legend rows={p.rows} total={p.total} />
        </section>
      </main>

      <footer className="pt-[67px] text-center">
        <p>Powered by <A>LibreNMS 2014.master</A>.</p>
        <p>LibreNMS is <A>Free Software</A>, released under the <A>GNU GPLv3</A>.</p>
        <p>Copyright © 2013-2014 by the LibreNMS Contributors.</p>
        <p>Copyright © 2006-2012 by Adam Armstrong.</p>
      </footer>
    </div>
  );
}

const EAST_PAGE: PageSpec = {
  id: "east", search: "poe ", device: "eastgw.pp23.polarparty.no", port: "GigabitEthernet1/0/17",
  from: "2014-09-27 10:56", to: "2014-10-04 10:56", thumbs: EAST_THUMBS,
  chart: {
    s: EAST, minor: 6.8, limit: 96,
    labels: [["15 M", 32], ["10 M", 66], ["5 M", 100], ["0", 134], ["-5 M", 168], ["-10 M", 202], ["-15 M", 236], ["-20 M", 270], ["-25 M", 304]],
  },
  rows: [
    { name: "In", color: "bg-[#91b13c]", values: ["2.75M", "2.79M", "16.08M", "5.57M"] },
    { name: "Out", color: "bg-[#8080bd]", values: ["19.90M", "2.75M", "28.12M", "10.92M"] },
  ],
  total: "Total 328.68G  (In 165.44G  Out 163.24G)",
};

const SKI_PAGE: PageSpec = {
  id: "ski", search: "", device: "skigw.pp23.polarparty.no", port: "TenGigabitEthernet5/4",
  from: "2014-09-27 10:53", to: "2014-10-04 10:53", thumbs: SKI_THUMBS,
  chart: {
    s: SKI, minor: 10.2, limit: 145,
    labels: [["2.2 G", 30], ["2.0 G", 51], ["1.8 G", 71], ["1.6 G", 91], ["1.4 G", 112], ["1.2 G", 132], ["1.0 G", 153], ["0.8 G", 173], ["0.6 G", 194], ["0.4 G", 214], ["0.2 G", 235], ["0.0", 255], ["-0.2 G", 276], ["-0.4 G", 296], ["-0.6 G", 316]],
  },
  rows: [
    { name: "In", color: "bg-[#91b13c]", values: ["63.35M", "485.40M", "2.25G", "1.08G"] },
    { name: "Out", color: "bg-[#8080bd]", values: ["113.46M", "224.71M", "683.35M", "531.99M"] },
  ],
  total: "Total  42.18T  (In  28.83T  Out  13.35T)",
};

/* ------------------------------------------------------------------ */
/* Taskbar                                                             */
/* ------------------------------------------------------------------ */

const Folder = ({ badge }: { badge?: boolean }) => (
  <Ico>
    <path d="M2 1.500l5-.8v14.600l-5-1z" fill="#f6e49a" stroke="#c8a848" strokeWidth=".5" />
    <path d="M7 1.500h6v12l-6 2z" fill="#ecd27a" stroke="#c8a848" strokeWidth=".5" />
    <path d="M13 9h1.500v4H13z" fill="#4aa0d8" />
    {badge && <path d="M6 8l3-2 2 2 2-2 3 2-2 2 1.500 2.500-4.500 3-4.500-3L8 10z" fill="#5db4f0" stroke="#2a78b8" strokeWidth=".5" />}
  </Ico>
);
const Screen = ({ mark = "#50c030", d = "M9 10l5 4M14 10l-5 4" }: { mark?: string; d?: string }) => (
  <Ico>
    <rect x="2" y="1" width="11" height="9" fill="#1c2ca8" stroke="#c8c8c8" strokeWidth="1.500" />
    <path d="M3 2h5L4 9z" fill="#6f8cf0" />
    <path d="M5 12h6v2H4z" fill="#b8b8b8" />
    <path d={d} stroke={mark} strokeWidth="1.600" />
  </Ico>
);
const Chrome = () => (
  <Ico>
    <circle cx="8" cy="8" r="7.500" fill="#f6c71c" />
    <path d="M8 8L1.500 4.200A7.500 7.500 0 0114.700 4.600H8z" fill="#de3a2c" />
    <path d="M8 8L1.500 4.200A7.500 7.500 0 007.500 15.500L11 9.500z" fill="#35a24a" />
    <circle cx="8" cy="8" r="3.600" fill="#fff" /><circle cx="8" cy="8" r="2.700" fill="#3f7fe8" />
  </Ico>
);
const Opera = () => (
  <Ico><ellipse cx="8" cy="8" rx="7.500" ry="8" fill="#e01c28" /><ellipse cx="8" cy="8" rx="3" ry="6" fill="#080c10" /></Ico>
);
const Globe = () => (
  <Ico><circle cx="9" cy="8" r="6.500" fill="#2a5a88" /><path d="M1 5c4-4 7 1 11-1-1 4-5 2-6 5 3 0 4 3 7 2-3 5-9 4-9-1-1-2-3-2-3-5z" fill="#a8c8e0" /></Ico>
);
const Clapper = () => (
  <Ico>
    <path d="M1 4l13-3" stroke="#eee" strokeWidth="2" strokeDasharray="2 1.500" />
    <rect x="2" y="6" width="12" height="9" fill="#f2f2f2" />
    <path d="M4 8.500h2v4H4M7.500 8.500h1.500v4H7.500" stroke="#d83020" /><path d="M11.500 8v5" stroke="#30a040" strokeWidth="1.500" />
  </Ico>
);
const Wifi = ({ c }: { c: string }) => (
  <Ico>
    <path d="M1 6c4-6 11-6 14-1l-3 3c-2-3-6-3-8 0z" fill={c} /><path d="M8 1v10M4 3l4 6 5-6" stroke="#fff" strokeOpacity=".5" />
    <path d="M2 13c3-3 5 0 8-2l4-1-4 4-4 1H2z" fill="#8a8f92" />
  </Ico>
);
const Torrent = () => (
  <Ico><circle cx="8" cy="8" r="8" fill="#5ab030" /><path d="M4 4l2 7c.5 2 3 2 3.500 0L8.500 4M9.500 10c1 2 2.500 1 2.500 0l-1-6" stroke="#fff" strokeWidth="1.900" /></Ico>
);
const Spotify = () => (
  <Ico><circle cx="8" cy="8" r="8" fill="#8ac400" /><path d="M3 5.500c3-1.200 7-1 10 .6M3.500 8.200c3-1 6-.8 8.500.6M4 10.800c2.500-.8 5-.6 7 .6" stroke="#1a2400" strokeWidth="1.500" /></Ico>
);
const Skype = () => (
  <Ico><circle cx="8" cy="8" r="7" fill="#12a5e8" /><circle cx="4.500" cy="4.500" r="4" fill="#12a5e8" /><circle cx="11.500" cy="11.500" r="4" fill="#12a5e8" /><path d="M11 5.500C10 3.500 5.500 4 5.500 6c0 2.500 5.500 1.300 5.500 4 0 2-5 2.500-6-.2" stroke="#fff" strokeWidth="1.900" /></Ico>
);
const Vm = () => (
  <Ico><rect x="1" y="1" width="11" height="11" rx="1" fill="none" stroke="#f08c1e" strokeWidth="2.400" /><rect x="4.500" y="4.500" width="10" height="10" rx="1" fill="none" stroke="#3a90d0" strokeWidth="2.200" /><rect x="5.500" y="5.500" width="5.500" height="5.500" fill="#fff" /></Ico>
);
const Picture = () => (
  <Ico><rect x="0" y="1" width="16" height="14" fill="#2a78b8" /><rect x="1.500" y="3" width="13" height="10" fill="#f4f4f4" /><rect x="3" y="4.500" width="10" height="7" fill="#8ec8f0" /><path d="M3 11.500l4-3 6 1v2z" fill="#3a6830" /></Ico>
);
const Note = () => (
  <Ico><path d="M2 2h12l1 13H1z" fill="#a8dce8" stroke="#5a98a8" strokeWidth=".6" /><path d="M3 2h11" stroke="#777" strokeWidth="2" strokeDasharray="1 1" /><path d="M4 6h8M4 8.500h8M4 11h8" stroke="#fff" /></Ico>
);
const Speaker = () => (
  <Ico><path d="M3 5.500h2v5H3z" fill="#888" /><path d="M6 5.500L10 2v12l-4-3.500z" fill="#c8c8c8" /></Ico>
);
const Dropbox = () => (
  <Ico><path d="M5 1l3 2.500L4.500 6 1 3.500zM11 1l4 2.500L11.500 6 8 3.500zM1 8.500L4.500 6 8 8.500 5 11zM8 8.500L11.500 6 15 8.500 11 11zM4 11.500l4-2.500 4 2.500L8 15z" fill="#5ebcf8" stroke="#c8ecff" strokeWidth=".4" /></Ico>
);

type Entry = { label: string; icon: ReactNode; bare?: boolean; active?: boolean };
const TASKS: Entry[][] = [
  [{ label: "A.Million....", icon: <Folder /> }, { label: "Dropbox (...", icon: <Folder badge /> }, { label: "Screenshots", icon: <Folder /> }],
  [{ label: "Remote Desktop", icon: <Screen />, bare: true }],
  [{ label: "Google ...", icon: <Chrome />, active: true }],
  [{ label: "Opera", icon: <Opera />, bare: true }],
  [{ label: "NFV – hve...", icon: <Globe /> }],
  [{ label: "Media Player Classic", icon: <Clapper />, bare: true }],
  [{ label: "Connectif...", icon: <Wifi c="#35a868" /> }],
  [{ label: "Connectif...", icon: <Wifi c="#4a90d0" /> }],
  [{ label: "µTorrent 3...", icon: <Torrent /> }],
  [{ label: "Spotify", icon: <Spotify /> }],
  [{ label: "Skype™ - ...", icon: <Skype /> }],
  [{ label: "Windows ...", icon: <Screen d="M3 6h2l1-3 2 4 1-2h3" mark="#40d840" /> }],
  [{ label: "Windows ...", icon: <Vm /> }],
  [{ label: "System", icon: <Screen d="M5 5l2 3 4-5" mark="#ffffff" /> }],
  [{ label: "net pp23 f...", icon: <Picture /> }, { label: "Screensho...", icon: <Picture /> }],
  [{ label: "Untitled - ...", icon: <Note /> }],
  [{ label: "Volume M...", icon: <Speaker /> }],
  [{ label: "Dropbox P...", icon: <Dropbox /> }],
];

function TaskButton({ e, first }: { e: Entry; first: boolean }) {
  if (e.bare)
    return <button aria-label={e.label} className="flex h-7 items-center justify-center">{e.icon}</button>;
  return (
    <div className="flex">
      <button
        className={`flex min-w-0 flex-1 items-center gap-1 overflow-hidden rounded-[3px] border pl-[8px] text-[11px] whitespace-nowrap text-white ${first ? "h-7" : "h-[30px]"} ${e.active ? "border-[#d8dadb] bg-linear-to-br from-[#8e9192] via-[#74787a] to-[#a0a3a4]" : "border-[#85898b] bg-linear-to-b from-[#6a6d6f] via-[#2a2e30] via-50% to-[#1b1f21]"}`}
      >
        {e.icon}
        {e.label}
      </button>
      {e.active && (
        <span className="flex"><span className="w-1 rounded-r-[3px] border-r border-[#a8abac] bg-[#3a3d3f]" /><span className="w-1 rounded-r-[3px] border-r border-[#777a7c] bg-[#222]" /></span>
      )}
    </div>
  );
}

const RedX = () => (
  <><circle cx="12" cy="12" r="4" fill="#d8262c" /><path d="M10.300 10.300l3.400 3.400M13.700 10.300l-3.400 3.400" stroke="#fff" strokeWidth="1.300" /></>
);

function Taskbar() {
  return (
    <aside className="flex flex-col border-r border-l border-r-black border-l-[#4a5a68] bg-[#060b0e] font-['Open_Sans','Noto_Sans',sans-serif] text-white">
      <button aria-label="Start" className="mx-auto mt-[9px] mb-4">
        <svg viewBox="0 0 38 38" className="size-[38px]">
          <defs>
            <radialGradient id="orb" cx="50%" cy="90%" r="85%"><stop offset="0" stopColor="#35d4ff" /><stop offset=".5" stopColor="#1273b4" /><stop offset="1" stopColor="#1b3f66" /></radialGradient>
          </defs>
          <circle cx="19" cy="19" r="18.500" fill="url(#orb)" stroke="#5d7486" />
          <path d="M4 14C7 4 31 4 34 14 26 19 12 12 4 14z" fill="#fff" fillOpacity=".4" />
          <path d="M12 9.500c3-1.500 5-1 7 0l-2 8c-2-1.300-4.500-1.300-7 0z" fill="#f0612a" />
          <path d="M20.500 10c3 1.500 6 1 9-.3l-2.200 8c-3 1.300-5.800 1.500-8.600.3z" fill="#8cc63e" />
          <path d="M9.500 19c3-1.300 5-1 7 0l-2 8c-2-1.300-4.500-1.300-7 0z" fill="#4aa4e4" />
          <path d="M18.200 19.500c3 1.300 5.500 1 8.600-.3l-2.200 8c-3 1.300-5.600 1.500-8.400.3z" fill="#fcc419" />
        </svg>
      </button>
      <div className="flex flex-col gap-1">
        {TASKS.map((g, i) => (
          <div key={i} className="flex flex-col">{g.map((e, j) => <TaskButton key={j} e={e} first={j === 0} />)}</div>
        ))}
      </div>
      <div className="mt-auto flex flex-col">
        <button aria-label="Show hidden icons" className="ml-2.5 w-2"><svg viewBox="0 0 5 8" className="h-2 w-[5px]"><path d="M5 0v8L0 4z" fill="#fff" /></svg></button>
        <div className="mt-3 flex justify-center gap-2">
          <Ico><path d="M1.500 1v14" stroke="#fff" strokeWidth="1.500" /><path d="M2.500 2h5v2h6v5h-6V8h-5z" fill="#fff" /><RedX /></Ico>
          <Ico><path d="M5 4.500h10v7.500H5zM7 14.500h6M1 1v4h3V1M2.500 5v8" stroke="#fff" strokeWidth="1.300" /></Ico>
          <Ico><path d="M1 5.500h2.500L7 2v12l-3.500-3.500H1z" fill="#fff" /><path d="M9 6c1 1 1 3 0 4M11 4.500c2 2 2 5 0 7M13 3c2.500 3 2.500 7 0 10" stroke="#fff" /></Ico>
          <Ico><path d="M5 0l3 2.500L4.500 5 1 2.500zM11 0l4 2.500L11.500 5 8 2.500zM1 7.500L4.500 5 8 7.500 5 10zM8 7.500L11.500 5 15 7.500 11 10zM4 10.500L8 8l4 2.500L8 14z" fill="#5ebcf8" /><RedX /></Ico>
        </div>
        <div className="mt-1.5 mb-px text-center text-[12px] leading-[17px]"><p>10:55</p><p>lørdag</p><p>04.10.2014</p></div>
        <button aria-label="Show desktop" className="h-3.5 border border-[#74797c] bg-linear-to-br from-[#55595b] to-[#0c1012]" />
      </div>
    </aside>
  );
}

/* ------------------------------------------------------------------ */
/* Windows                                                             */
/* ------------------------------------------------------------------ */

const TABS: TabSpec[] = [
  { title: "pp23:ip-plan", icon: <WikiIcon /> }, { title: "pp23:start [T", icon: <WikiIcon /> },
  { title: "(3) Error | Tr", icon: <TrelloIcon /> }, { title: "404 Not Fou", icon: <PageIcon /> },
  { title: "(3) Opprigg", icon: <TrelloIcon red /> }, { title: "(3) Opprigg", icon: <TrelloIcon red /> },
  { title: "Geekevents", icon: <GeekIcon /> }, { title: "pp23 linknet", icon: <DocsIcon /> },
  { title: "Ny fane" }, { title: "Devices - Lib", icon: <PageIcon /> },
  { title: "LibreNMS", icon: <PageIcon />, active: true }, { title: "infoskjerm", icon: <PageIcon /> },
  { title: "librenms/lib", icon: <GithubIcon /> }, { title: "Fwd: Nettpr", icon: <GmailIcon /> },
];

const chromeFont = "font-['Open_Sans','Noto_Sans',sans-serif]";

export default function App() {
  return (
    <div className="grid min-h-screen grid-cols-[minmax(0,1816fr)_104px_minmax(0,1920fr)] bg-white">
      <div className={`flex min-w-0 flex-col ${chromeFont}`}>
        <header className="flex h-6 bg-linear-to-r from-[#55677c] via-[#6d8fb2] to-[#39485a]">
          <div role="tablist" className="flex min-w-0 flex-1 pt-px pr-2 pl-[3px]">{TABS.map((t, i) => <Tab key={i} tab={t} />)}</div>
          <div className="flex w-[156px]"><NewTab /><WindowButtons /></div>
        </header>
        <Toolbar url="librenms.pp23.polarparty.no/graphs/to=1412412961/id=120/type=port_bits/from=1411808161/" />
        <Page p={EAST_PAGE} />
        <div className="-mt-[21px] h-[21px] w-[604px] rounded-tr-[3px] bg-[#f3f3f3] pl-[3px] text-[12px] leading-5 text-[#cacaca]">
          librenms.pp23.polarparty.no/graphs/to=1412412965/id=120/type=port_bits/from=1412240165/
        </div>
        <footer className="flex h-[43px] items-center border-t border-[#c4c4c4] bg-[#dedede] text-[12px] text-black">
          <div className="ml-1 flex h-9 rounded-[3px] border border-[#a8a8a8] border-b-[#808080] bg-linear-to-b from-[#f0f0f0] to-[#e2e2e2]">
            <button className="flex w-[190px] items-center gap-3 pl-2">
              <Ico><rect x=".5" y=".5" width="15" height="15" fill="#fff" stroke="#999" /><path d="M2 2h7v9H2z" fill="#c02818" /><path d="M7 5h6v8H6z" fill="#e8b030" /><circle cx="11" cy="11" r="2.500" fill="#281808" /></Ico>
              <span className="text-[11px]">net pp23 fredag 1800.png</span>
            </button>
            <button aria-label="More" className="flex w-[13px] items-center justify-center border-l border-[#b4b4b4]"><svg viewBox="0 0 6 4" className="h-1 w-1.5"><path d="M0 0h6L3 4z" fill="#555" /></svg></button>
          </div>
          <svg viewBox="0 0 12 12" className="ml-auto size-3"><path d="M3.500 0h5v5.500H12L6 12 0 5.500h3.500z" fill="#555" /></svg>
          <a href="#" className="ml-1.5 w-[104px] text-[11px] whitespace-nowrap underline">Vis alle nedlastinger</a>
          <button aria-label="Close downloads" className="mr-[15px] ml-5"><svg viewBox="0 0 8 8" className="size-2"><path d="M1 1l6 6M7 1L1 7" stroke="#444" strokeWidth="1.800" /></svg></button>
        </footer>
      </div>

      <Taskbar />

      <div className={`flex min-w-0 flex-col ${chromeFont}`}>
        <header className="flex h-6 bg-linear-to-r from-[#b4f0fb] via-[#c8fbff] to-[#d8f4fc]">
          <div role="tablist" className="flex w-[198px] pt-px"><Tab tab={{ title: "LibreNMS", icon: <PageIcon />, active: true }} /></div>
          <div className="ml-1.5"><NewTab light /></div>
          <div aria-hidden="true" className="flex min-w-0 flex-1 items-center overflow-hidden blur-[3px]">
            <span className="h-2 w-[120px] bg-[#7fb4d8]" />
            <span className="ml-12 h-5 w-4 bg-[#6cc4f0]" />
            <span className="ml-52 h-2 w-[110px] bg-[#b4e8f4]" />
            <span className="ml-14 h-4 w-[150px] bg-[#b0e4f2]" />
            <span className="ml-24 h-2 w-[120px] bg-[#a8dcee]" />
            <span className="ml-20 h-2 w-[120px] bg-[#a8dcee]" />
            <span className="ml-36 h-4 w-3 bg-[#a8dcee]" />
          </div>
          <WindowButtons light />
        </header>
        <Toolbar url="librenms.pp23.polarparty.no/graphs/to=1412412810/id=157/type=port_bits/from=1411808010/" />
        <Page p={SKI_PAGE} />
      </div>
    </div>
  );
}
